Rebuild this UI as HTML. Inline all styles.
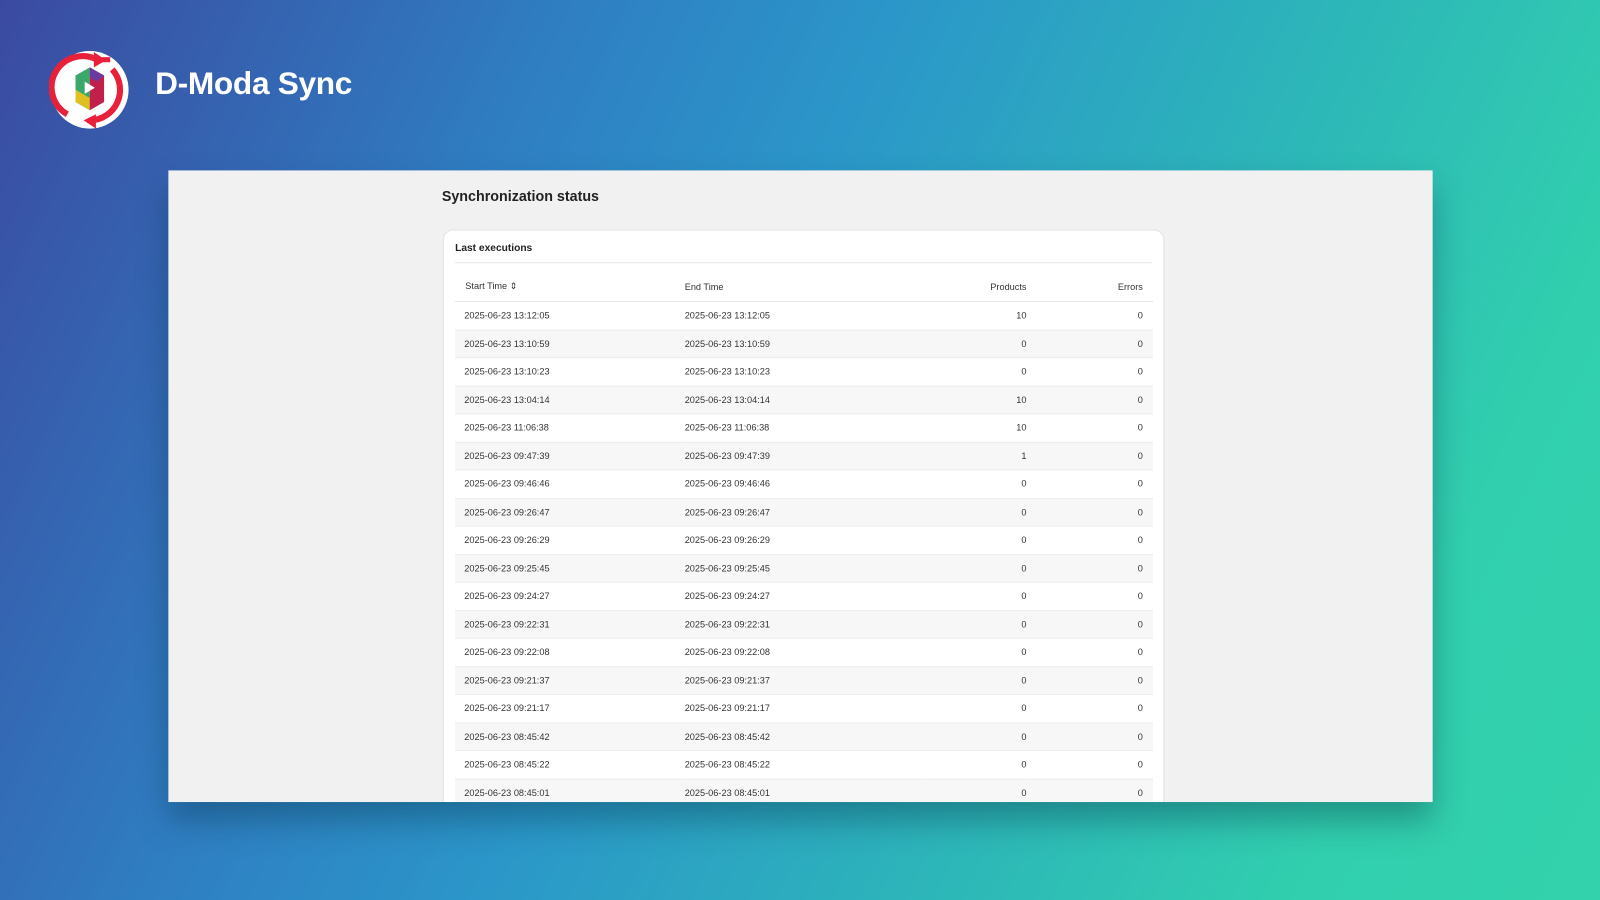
<!DOCTYPE html>
<html><head><meta charset="utf-8"><style>
html,body{margin:0;padding:0;width:1600px;height:900px;overflow:hidden}
#w{position:absolute;left:0;top:0;width:1568px;height:882px;overflow:hidden;transform:scale(1.020408);transform-origin:0 0;
background:linear-gradient(115deg,#3b4aa0 0%,#2f7ec2 28%,#2b97c9 45%,#2db8b8 68%,#31cfae 85%,#33d2ac 100%);font-family:"Liberation Sans",sans-serif}
.brand{position:absolute;left:152px;top:64px;font-size:31px;font-weight:bold;color:#fff;letter-spacing:-0.3px}
.panel{position:absolute;left:165px;top:167px;width:1239px;height:619px;background:#f1f1f1;overflow:hidden;box-shadow:0 18px 30px rgba(0,40,60,.35)}
h1{position:absolute;left:268px;top:17px;margin:0;font-size:14px;font-weight:bold;color:#222}
.card{position:absolute;left:269px;top:58px;width:705px;height:600px;background:#fff;border:1px solid #e3e3e3;border-radius:10px}
.lt{position:absolute;left:11px;top:12px;font-size:10px;font-weight:bold;color:#222}
.dv{position:absolute;left:11px;right:11px;top:31px;border-top:1px solid #e6e6e6}
table{position:absolute;left:11px;top:40px;width:684px;border-collapse:collapse;table-layout:fixed;font-size:9px;color:#333}
th{font-weight:normal;height:29px;text-align:left;border-bottom:1px solid #e3e3e3;color:#333;padding:0}
td{height:26.5px;border-bottom:1px solid #ececec;padding:0}
tr:nth-child(odd) td{background:#f7f7f7}
.c1{padding-left:9px}.c3{text-align:right}.c4{text-align:right;padding-right:10px}
th.c1{padding-left:10px}
</style></head><body><div id="w">
<svg style="position:absolute;left:48px;top:46px" width="82" height="82" viewBox="0 0 82 82">
<circle cx="40" cy="42" r="38" fill="#fff"/>
<path d="M18 66 A30 30 0 0 1 48 13" fill="none" stroke="#e8203a" stroke-width="6"/>
<path d="M62 22 A30 30 0 0 1 40 72" fill="none" stroke="#e8203a" stroke-width="6"/>
<polygon points="44,5 56,13 44,20" fill="#e8203a"/><polygon points="46,66 34,72 46,80" fill="#e8203a"/>
<polygon points="26,28 40,20 40,62 26,54" fill="#3aa86a"/><polygon points="26,42 40,50 40,62 26,54" fill="#e0c020"/>
<polygon points="40,20 54,28 54,54 40,62" fill="#c0204a"/><polygon points="40,20 54,28 47,34 40,30" fill="#6b3aa0"/>
<polygon points="35,34 45,40 35,46" fill="#fff"/>
<rect x="52" y="10" width="8" height="5" fill="#e8203a"/>
</svg>
<div class="brand">D-Moda Sync</div>
<div class="panel"><h1>Synchronization status</h1>
<div class="card"><div class="lt">Last executions</div><div class="dv"></div>
<table><colgroup><col style="width:225px"><col style="width:234px"><col style="width:101px"><col style="width:124px"></colgroup>
<tr><th class="c1">Start Time ⇕</th><th>End Time</th><th class="c3">Products</th><th class="c4">Errors</th></tr>
<tr><td class="c1">2025-06-23 13:12:05</td><td>2025-06-23 13:12:05</td><td class="c3">10</td><td class="c4">0</td></tr>
<tr><td class="c1">2025-06-23 13:10:59</td><td>2025-06-23 13:10:59</td><td class="c3">0</td><td class="c4">0</td></tr>
<tr><td class="c1">2025-06-23 13:10:23</td><td>2025-06-23 13:10:23</td><td class="c3">0</td><td class="c4">0</td></tr>
<tr><td class="c1">2025-06-23 13:04:14</td><td>2025-06-23 13:04:14</td><td class="c3">10</td><td class="c4">0</td></tr>
<tr><td class="c1">2025-06-23 11:06:38</td><td>2025-06-23 11:06:38</td><td class="c3">10</td><td class="c4">0</td></tr>
<tr><td class="c1">2025-06-23 09:47:39</td><td>2025-06-23 09:47:39</td><td class="c3">1</td><td class="c4">0</td></tr>
<tr><td class="c1">2025-06-23 09:46:46</td><td>2025-06-23 09:46:46</td><td class="c3">0</td><td class="c4">0</td></tr>
<tr><td class="c1">2025-06-23 09:26:47</td><td>2025-06-23 09:26:47</td><td class="c3">0</td><td class="c4">0</td></tr>
<tr><td class="c1">2025-06-23 09:26:29</td><td>2025-06-23 09:26:29</td><td class="c3">0</td><td class="c4">0</td></tr>
<tr><td class="c1">2025-06-23 09:25:45</td><td>2025-06-23 09:25:45</td><td class="c3">0</td><td class="c4">0</td></tr>
<tr><td class="c1">2025-06-23 09:24:27</td><td>2025-06-23 09:24:27</td><td class="c3">0</td><td class="c4">0</td></tr>
<tr><td class="c1">2025-06-23 09:22:31</td><td>2025-06-23 09:22:31</td><td class="c3">0</td><td class="c4">0</td></tr>
<tr><td class="c1">2025-06-23 09:22:08</td><td>2025-06-23 09:22:08</td><td class="c3">0</td><td class="c4">0</td></tr>
<tr><td class="c1">2025-06-23 09:21:37</td><td>2025-06-23 09:21:37</td><td class="c3">0</td><td class="c4">0</td></tr>
<tr><td class="c1">2025-06-23 09:21:17</td><td>2025-06-23 09:21:17</td><td class="c3">0</td><td class="c4">0</td></tr>
<tr><td class="c1">2025-06-23 08:45:42</td><td>2025-06-23 08:45:42</td><td class="c3">0</td><td class="c4">0</td></tr>
<tr><td class="c1">2025-06-23 08:45:22</td><td>2025-06-23 08:45:22</td><td class="c3">0</td><td class="c4">0</td></tr>
<tr><td class="c1">2025-06-23 08:45:01</td><td>2025-06-23 08:45:01</td><td class="c3">0</td><td class="c4">0</td></tr>
</table></div></div>
</div></body></html>
